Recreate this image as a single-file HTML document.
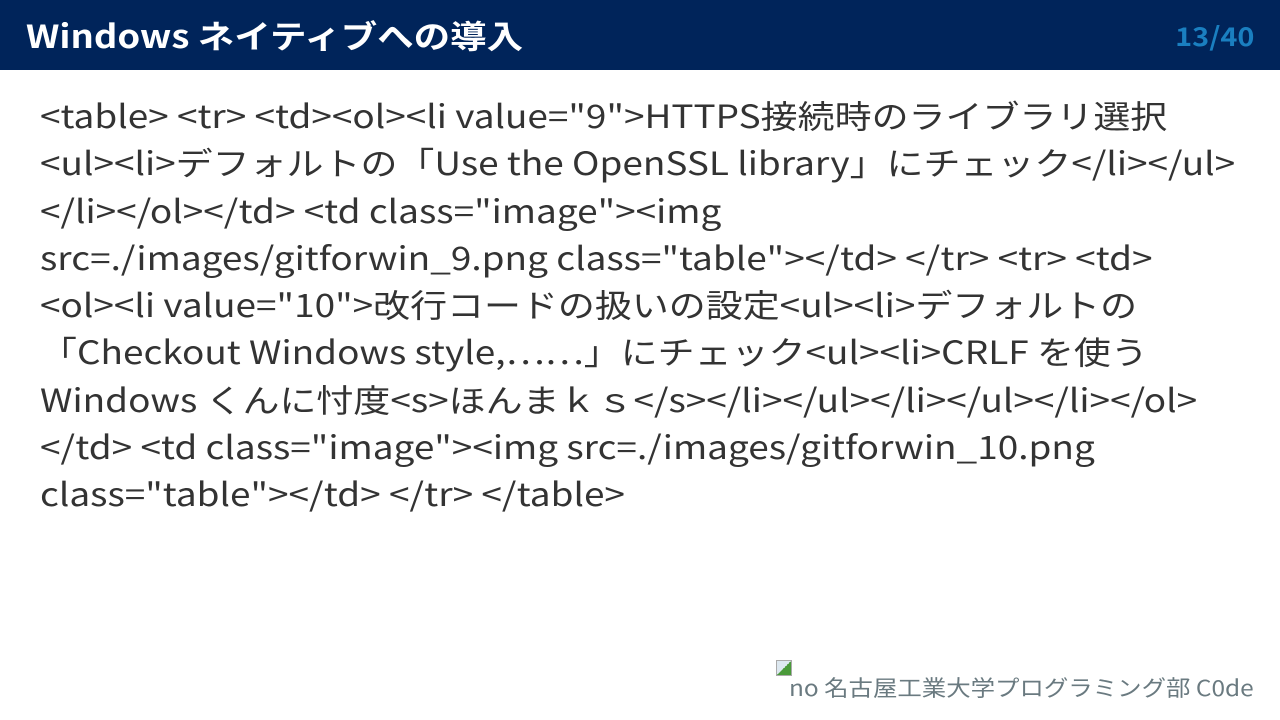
<!DOCTYPE html>
<html><head><meta charset="utf-8"><style>
body{margin:0;width:1280px;height:720px;background:#fff;overflow:hidden;font-family:"Noto Sans CJK JP","Liberation Sans",sans-serif;position:relative}
.h{position:absolute;left:0;top:0;width:1280px;height:70px;background:#00245a}
.t{position:absolute;left:26px;top:13px;color:#fff;font-size:32px;font-weight:bold;line-height:44px;white-space:nowrap;transform:scaleX(1.14);transform-origin:left}
.n{position:absolute;right:26px;top:18px;color:#1a7fc0;font-size:26px;font-weight:bold;line-height:36px;transform:scaleX(1.11);transform-origin:right}
.b{position:absolute;left:40px;top:92px;font-size:32px;line-height:47.3px;color:#333;white-space:nowrap;transform:scaleX(1.155);transform-origin:left}
.f{position:absolute;right:26px;top:672px;font-size:22px;color:#6a7a80;line-height:30px;white-space:nowrap;transform:scaleX(1.11);transform-origin:right}
.i{position:absolute;left:776px;top:660px;width:16px;height:16px;border:1px solid #aaa;box-sizing:border-box;background:linear-gradient(135deg,#dde8f0 50%,#4a9a3a 50%)}
</style></head><body>
<div class="h"><div class="t">Windows ネイティブへの導入</div><div class="n">13/40</div></div>
<div class="b">&lt;table&gt; &lt;tr&gt; &lt;td&gt;&lt;ol&gt;&lt;li value="9"&gt;HTTPS接続時のライブラリ選択<br>&lt;ul&gt;&lt;li&gt;デフォルトの「Use the OpenSSL library」にチェック&lt;/li&gt;&lt;/ul&gt;<br>&lt;/li&gt;&lt;/ol&gt;&lt;/td&gt; &lt;td class="image"&gt;&lt;img<br>src=./images/gitforwin_9.png class="table"&gt;&lt;/td&gt; &lt;/tr&gt; &lt;tr&gt; &lt;td&gt;<br>&lt;ol&gt;&lt;li value="10"&gt;改行コードの扱いの設定&lt;ul&gt;&lt;li&gt;デフォルトの<br>「Checkout Windows style,……」にチェック&lt;ul&gt;&lt;li&gt;CRLF を使う<br>Windows くんに忖度&lt;s&gt;ほんまｋｓ&lt;/s&gt;&lt;/li&gt;&lt;/ul&gt;&lt;/li&gt;&lt;/ul&gt;&lt;/li&gt;&lt;/ol&gt;<br>&lt;/td&gt; &lt;td class="image"&gt;&lt;img src=./images/gitforwin_10.png<br>class="table"&gt;&lt;/td&gt; &lt;/tr&gt; &lt;/table&gt;</div>
<div class="i"></div>
<div class="f">no 名古屋工業大学プログラミング部 C0de</div>
</body></html>
